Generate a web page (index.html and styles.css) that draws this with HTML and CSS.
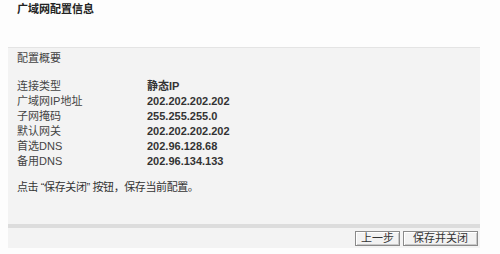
FILE: index.html
```html
<!DOCTYPE html>
<html lang="zh-CN">
<head>
<meta charset="utf-8">
<title>广域网配置信息</title>
<link rel="stylesheet" href="styles.css">
</head>
<body>
<div class="title">广域网配置信息</div>
<div class="panel">
  <div class="heading">配置概要</div>
  <div class="rows">
    <div class="row"><span class="label">连接类型</span><span class="value">静态IP</span></div>
    <div class="row"><span class="label">广域网IP地址</span><span class="value">202.202.202.202</span></div>
    <div class="row"><span class="label">子网掩码</span><span class="value">255.255.255.0</span></div>
    <div class="row"><span class="label">默认网关</span><span class="value">202.202.202.202</span></div>
    <div class="row"><span class="label">首选DNS</span><span class="value">202.96.128.68</span></div>
    <div class="row"><span class="label">备用DNS</span><span class="value">202.96.134.133</span></div>
  </div>
  <div class="tip">点击 “保存关闭” 按钮，保存当前配置。</div>
</div>
<div class="band"></div>
<div class="footer">
  <button class="btn btn-prev">上一步</button>
  <button class="btn btn-save">保存并关闭</button>
</div>
</body>
</html>
```

FILE: styles.css
```css
html, body {
  margin: 0;
  padding: 0;
  background: #fdfdfd;
}
body {
  font-family: "Liberation Sans", "Noto Sans CJK SC", sans-serif;
  font-size: 11px;
  color: #333;
  width: 500px;
}
.title {
  height: 47px;
  padding-left: 17px;
  line-height: 18px;
  font-weight: bold;
  color: #222;
  box-sizing: border-box;
}
.panel {
  margin-left: 8px;
  width: 472px;
  height: 177px;
  box-sizing: border-box;
  border-top: 1px solid #e4e4e4;
  background: #f3f3f3;
  padding: 3px 0 0 9px;
}
.heading {
  line-height: 15px;
  color: #444;
}
.rows {
  margin-top: 13px;
}
.row {
  display: flex;
  line-height: 15px;
  height: 15px;
}
.label {
  width: 130px;
  color: #444;
}
.value {
  font-weight: bold;
  color: #333;
}
.tip {
  margin-top: 11px;
  line-height: 15px;
  color: #333;
  letter-spacing: -0.4px;
}
.band {
  margin-left: 8px;
  width: 472px;
  height: 4px;
  background: #dcdcdc;
}
.footer {
  margin-left: 8px;
  width: 472px;
  height: 20px;
  box-sizing: border-box;
  background: #f3f3f3;
  padding: 3px 2px 0 0;
  display: flex;
  justify-content: flex-end;
  gap: 3px;
}
.btn {
  height: 15px;
  margin: 0;
  padding: 0;
  font-family: "Liberation Sans", "Noto Sans CJK SC", sans-serif;
  font-size: 11px;
  line-height: 13px;
  color: #333;
  background: #f2f2f2;
  border: 1px solid #8a8a8a;
  box-shadow: inset 1px 1px 0 #ffffff, inset -1px -1px 0 #c8c8c8;
}
.btn-prev {
  width: 45px;
}
.btn-save {
  width: 75px;
}
```
